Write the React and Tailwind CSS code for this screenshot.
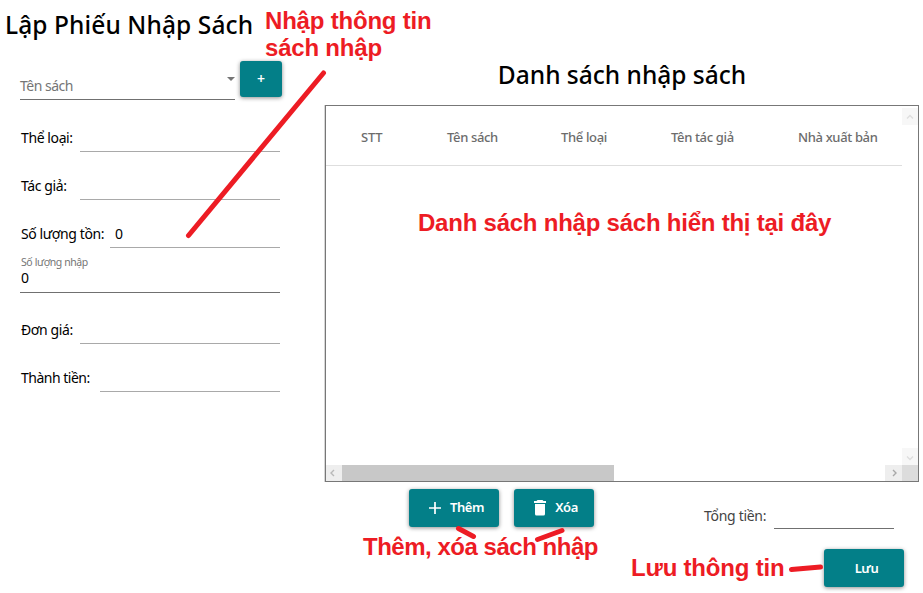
const UI = "font-['Noto_Sans','Open_Sans',sans-serif]";

function Field({ label, width, tracking, value, className = "" }) {
  return (
    <div className={`flex h-12 w-[260px] items-end ${className}`}>
      <label className={`h-6 shrink-0 whitespace-nowrap pl-px text-[14px] leading-5 ${width} ${tracking}`}>{label}</label>
      <div className="h-6 flex-1 border-b border-[#a9a9a9] pl-[5px] text-[14px] leading-5">{value}</div>
    </div>
  );
}

function Button({ children, className = "" }) {
  return (
    <button className={`flex items-center justify-center rounded-[3px] bg-[#037f88] text-[13px] font-semibold text-white shadow-[0_1px_4px_rgba(0,0,0,0.45)] ${className}`}>
      {children}
    </button>
  );
}

function Arrow({ d, className = "" }) {
  return (
    <div className={`flex shrink-0 items-center justify-center ${className}`}>
      <svg width="10" height="10" viewBox="0 0 10 10" fill="none" stroke="currentColor" strokeWidth="1.4"><path d={d} /></svg>
    </div>
  );
}

function EntryForm() {
  return (
    <section className="h-full w-[325px] shrink-0 pl-5">
      <h1 className="-ml-[15px] h-[51px] whitespace-nowrap text-[24.500px] leading-[50px] font-medium tracking-[0.1px]">Lập Phiếu Nhập Sách</h1>
      <div className="flex h-[53px] gap-[5px]">
        <div className="flex h-[49px] w-[215px] justify-between border-b border-[#707070]">
          <span className="pt-[25px] text-[14px] leading-5 tracking-[-0.5px] text-[#757575]">Tên sách</span>
          <svg className="mt-[26px]" width="8" height="5" viewBox="0 0 8 5" fill="#757575"><path d="M0 0h8L4 4z" /></svg>
        </div>
        <Button className="mt-[10px] h-9 w-[42px] pb-px text-[14px]">+</Button>
      </div>
      <Field label="Thể loại:" width="w-[60px]" tracking="tracking-[-0.4px]" />
      <Field label="Tác giả:" width="w-[60px]" tracking="tracking-[-0.4px]" />
      <Field label="Số lượng tồn:" width="w-[90px]" tracking="tracking-[-0.4px]" value="0" />
      <div className="flex h-[45px] w-[260px] flex-col border-b border-[#707070] pl-px">
        <span className="mt-[6px] text-[10.500px] leading-4 tracking-[-0.4px] text-[#757575]">Số lượng nhập</span>
        <span className="text-[14px] leading-[15px]">0</span>
      </div>
      <Field label="Đơn giá:" width="w-[60px]" tracking="tracking-[-0.4px]" className="mt-[3px]" />
      <Field label="Thành tiền:" width="w-[80px]" tracking="tracking-[-0.5px]" />
    </section>
  );
}

function BookTable() {
  return (
    <div className="flex h-[377px] w-[594px] flex-col border border-[#777777] shadow-[-1px_0_0_#d6d6d6]">
      <div className="flex flex-1">
        <div className="w-[576px]">
          <div className="flex h-[60px] items-center border-b border-[#dedede] pt-[5px] pl-[35px] text-[13px] font-medium tracking-[-0.35px] whitespace-nowrap text-[#6c6c6c]">
            <span className="w-[86px] tracking-[-0.2px]">STT</span>
            <span className="w-[114px]">Tên sách</span>
            <span className="w-[110px]">Thể loại</span>
            <span className="w-[127px]">Tên tác giả</span>
            <span>Nhà xuất bản</span>
          </div>
        </div>
        <div className="flex w-4 flex-col justify-between pt-[2px]">
          <Arrow d="M2 6.5l3-3 3 3" className="h-[17px] bg-[#f7f7f7] text-[#dedede]" />
          <Arrow d="M2 4.500l3 3 3-3" className="h-[17px] bg-[#f7f7f7] text-[#dedede]" />
        </div>
      </div>
      <div className="flex h-4">
        <Arrow d="M5 2L2 5l3 3" className="w-4 bg-[#eeeeee] text-[#b8b8b8]" />
        <div className="w-[272px] bg-[#c8c8c8]" />
        <div className="flex-1" />
        <Arrow d="M4 2l3 3-3 3" className="w-[17px] bg-[#eeeeee] text-[#a8a8a8]" />
        <div className="w-4 bg-[#dcdcdc]" />
      </div>
    </div>
  );
}

function Annotations() {
  return (
    <div className="pointer-events-none absolute inset-0 font-['Liberation_Sans',sans-serif] text-[24px] leading-[27px] font-bold whitespace-nowrap text-[#ed1c24]">
      <p className="absolute top-[7px] left-[265px] tracking-[-0.2px]">Nhập thông tin<br />sách nhập</p>
      <p className="absolute top-[209px] left-[418px] tracking-[-0.23px]">Danh sách nhập sách hiển thị tại đây</p>
      <p className="absolute top-[533px] left-[363px] tracking-[-0.48px]">Thêm, xóa sách nhập</p>
      <p className="absolute top-[554px] left-[631px] tracking-[-0.2px]">Lưu thông tin</p>
      <svg className="absolute inset-0" width="923" height="593" fill="none" stroke="#ed1c24" strokeWidth="5" strokeLinecap="round">
        <path d="M323.500 73L188.500 235.500M458.500 528.500L473.500 536.500M562 530.500L537.500 539.500M791.500 569.500L820.500 567" />
      </svg>
    </div>
  );
}

export default function App() {
  return (
    <main className={`relative flex h-[593px] w-[923px] overflow-hidden bg-white text-black ${UI}`}>
      <EntryForm />
      <section className="flex w-[594px] flex-col">
        <h2 className="h-[105px] pt-[59px] text-center text-[24.500px] leading-8 font-medium">Danh sách nhập sách</h2>
        <BookTable />
        <div className="flex h-[67px] pt-[7px] pl-[84px]">
          <Button className="h-[38px] w-[90px] gap-[9px] pl-[5px] tracking-[-0.4px]">
            <svg width="12" height="12" viewBox="0 0 12 12" stroke="white" strokeWidth="1.7"><path d="M6 0v12M0 6h12" /></svg>Thêm
          </Button>
          <Button className="ml-[15px] h-[38px] w-20 gap-[9px] pl-[4px] tracking-[-0.4px]">
            <svg width="12" height="16" viewBox="0 0 12 16" fill="white"><path d="M3.500 0h5l1 1H12v2H0V1h2.500zM1 4h10v10q0 1.500-1.500 1.500h-7Q1 15.500 1 14z" /></svg>Xóa
          </Button>
          <span className="ml-[110px] w-[70px] pt-[17px] text-[14px] leading-5 tracking-[-0.3px] whitespace-nowrap text-[#444444]">Tổng tiền:</span>
          <div className="h-10 w-[120px] border-b border-[#707070]" />
        </div>
        <Button className="ml-[499px] h-[38px] w-20 pt-px pl-[5px] tracking-[-0.4px]">Lưu</Button>
      </section>
      <Annotations />
    </main>
  );
}
